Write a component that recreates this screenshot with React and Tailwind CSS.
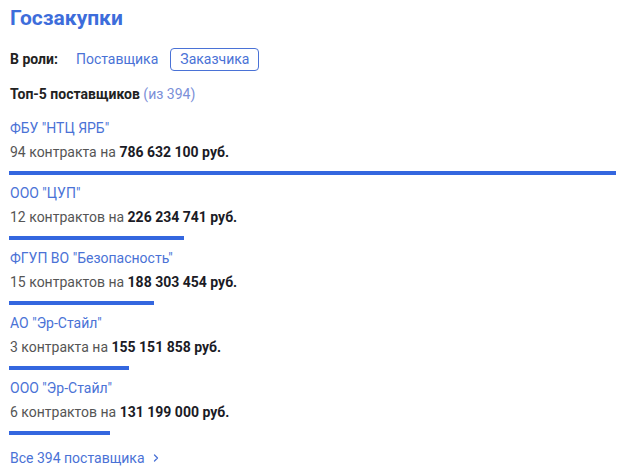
import React from 'react';

const suppliers = [
  { name: 'ФБУ "НТЦ ЯРБ"', count: '94 контракта', sum: 786632100 },
  { name: 'ООО "ЦУП"', count: '12 контрактов', sum: 226234741 },
  { name: 'ФГУП ВО "Безопасность"', count: '15 контрактов', sum: 188303454 },
  { name: 'АО "Эр-Стайл"', count: '3 контракта', sum: 155151858 },
  { name: 'ООО "Эр-Стайл"', count: '6 контрактов', sum: 131199000 },
];

const formatSum = (n) => n.toString().replace(/\B(?=(\d{3})+(?!\d))/g, ' ');

const App = () => {
  const max = suppliers[0].sum;

  return (
    <div
      className="w-[624px] h-[472px] bg-white pl-[9px] pr-2 pt-[4px] overflow-hidden"
      style={{ fontFamily: 'Roboto, "Noto Sans", sans-serif' }}
    >
      <h2 className="text-[21px] leading-[28px] font-bold text-[#3d6ddb] ml-px">Госзакупки</h2>

      <div className="flex items-center mt-[16px] h-[23px] text-[14px]">
        <span className="font-bold text-[#222] ml-px">В роли:</span>
        <span className="ml-[18px] text-[#4a72d6]">Поставщика</span>
        <span className="ml-[12px] h-[23px] px-[9px] flex items-center border border-[#4a72d6] rounded-[4px] text-[#4a72d6]">
          Заказчика
        </span>
      </div>

      <div className="mt-[13px] text-[14px] leading-5 ml-px">
        <span className="font-bold text-[#222]">Топ-5 поставщиков</span>{' '}
        <span className="text-[#7b8fd8]">(из 394)</span>
      </div>

      <div className="mt-[14px] flex flex-col gap-[8px]">
        {suppliers.map((s) => (
          <div key={s.name}>
            <div className="text-[14px] leading-5 text-[#4a72d6] ml-px">{s.name}</div>
            <div className="mt-1 text-[14px] leading-5 text-[#555] ml-px">
              {s.count} на{' '}
              <span className="font-bold text-[#1b1b26]">{formatSum(s.sum)} руб.</span>
            </div>
            <div className="mt-[9px] h-1 bg-[#3467df]" style={{ width: `${(s.sum / max) * 607}px` }} />
          </div>
        ))}
      </div>

      <div className="mt-[13px] flex items-center text-[14px] leading-5 text-[#4a72d6] ml-px">
        Все 394 поставщика
        <svg className="ml-[6px]" width="10" height="10" viewBox="0 0 10 10" fill="none">
          <path d="M3.5 2 L6.5 5 L3.5 8" stroke="#4a72d6" strokeWidth="1.3" strokeLinecap="round" strokeLinejoin="round" />
        </svg>
      </div>
    </div>
  );
};

export default App;
